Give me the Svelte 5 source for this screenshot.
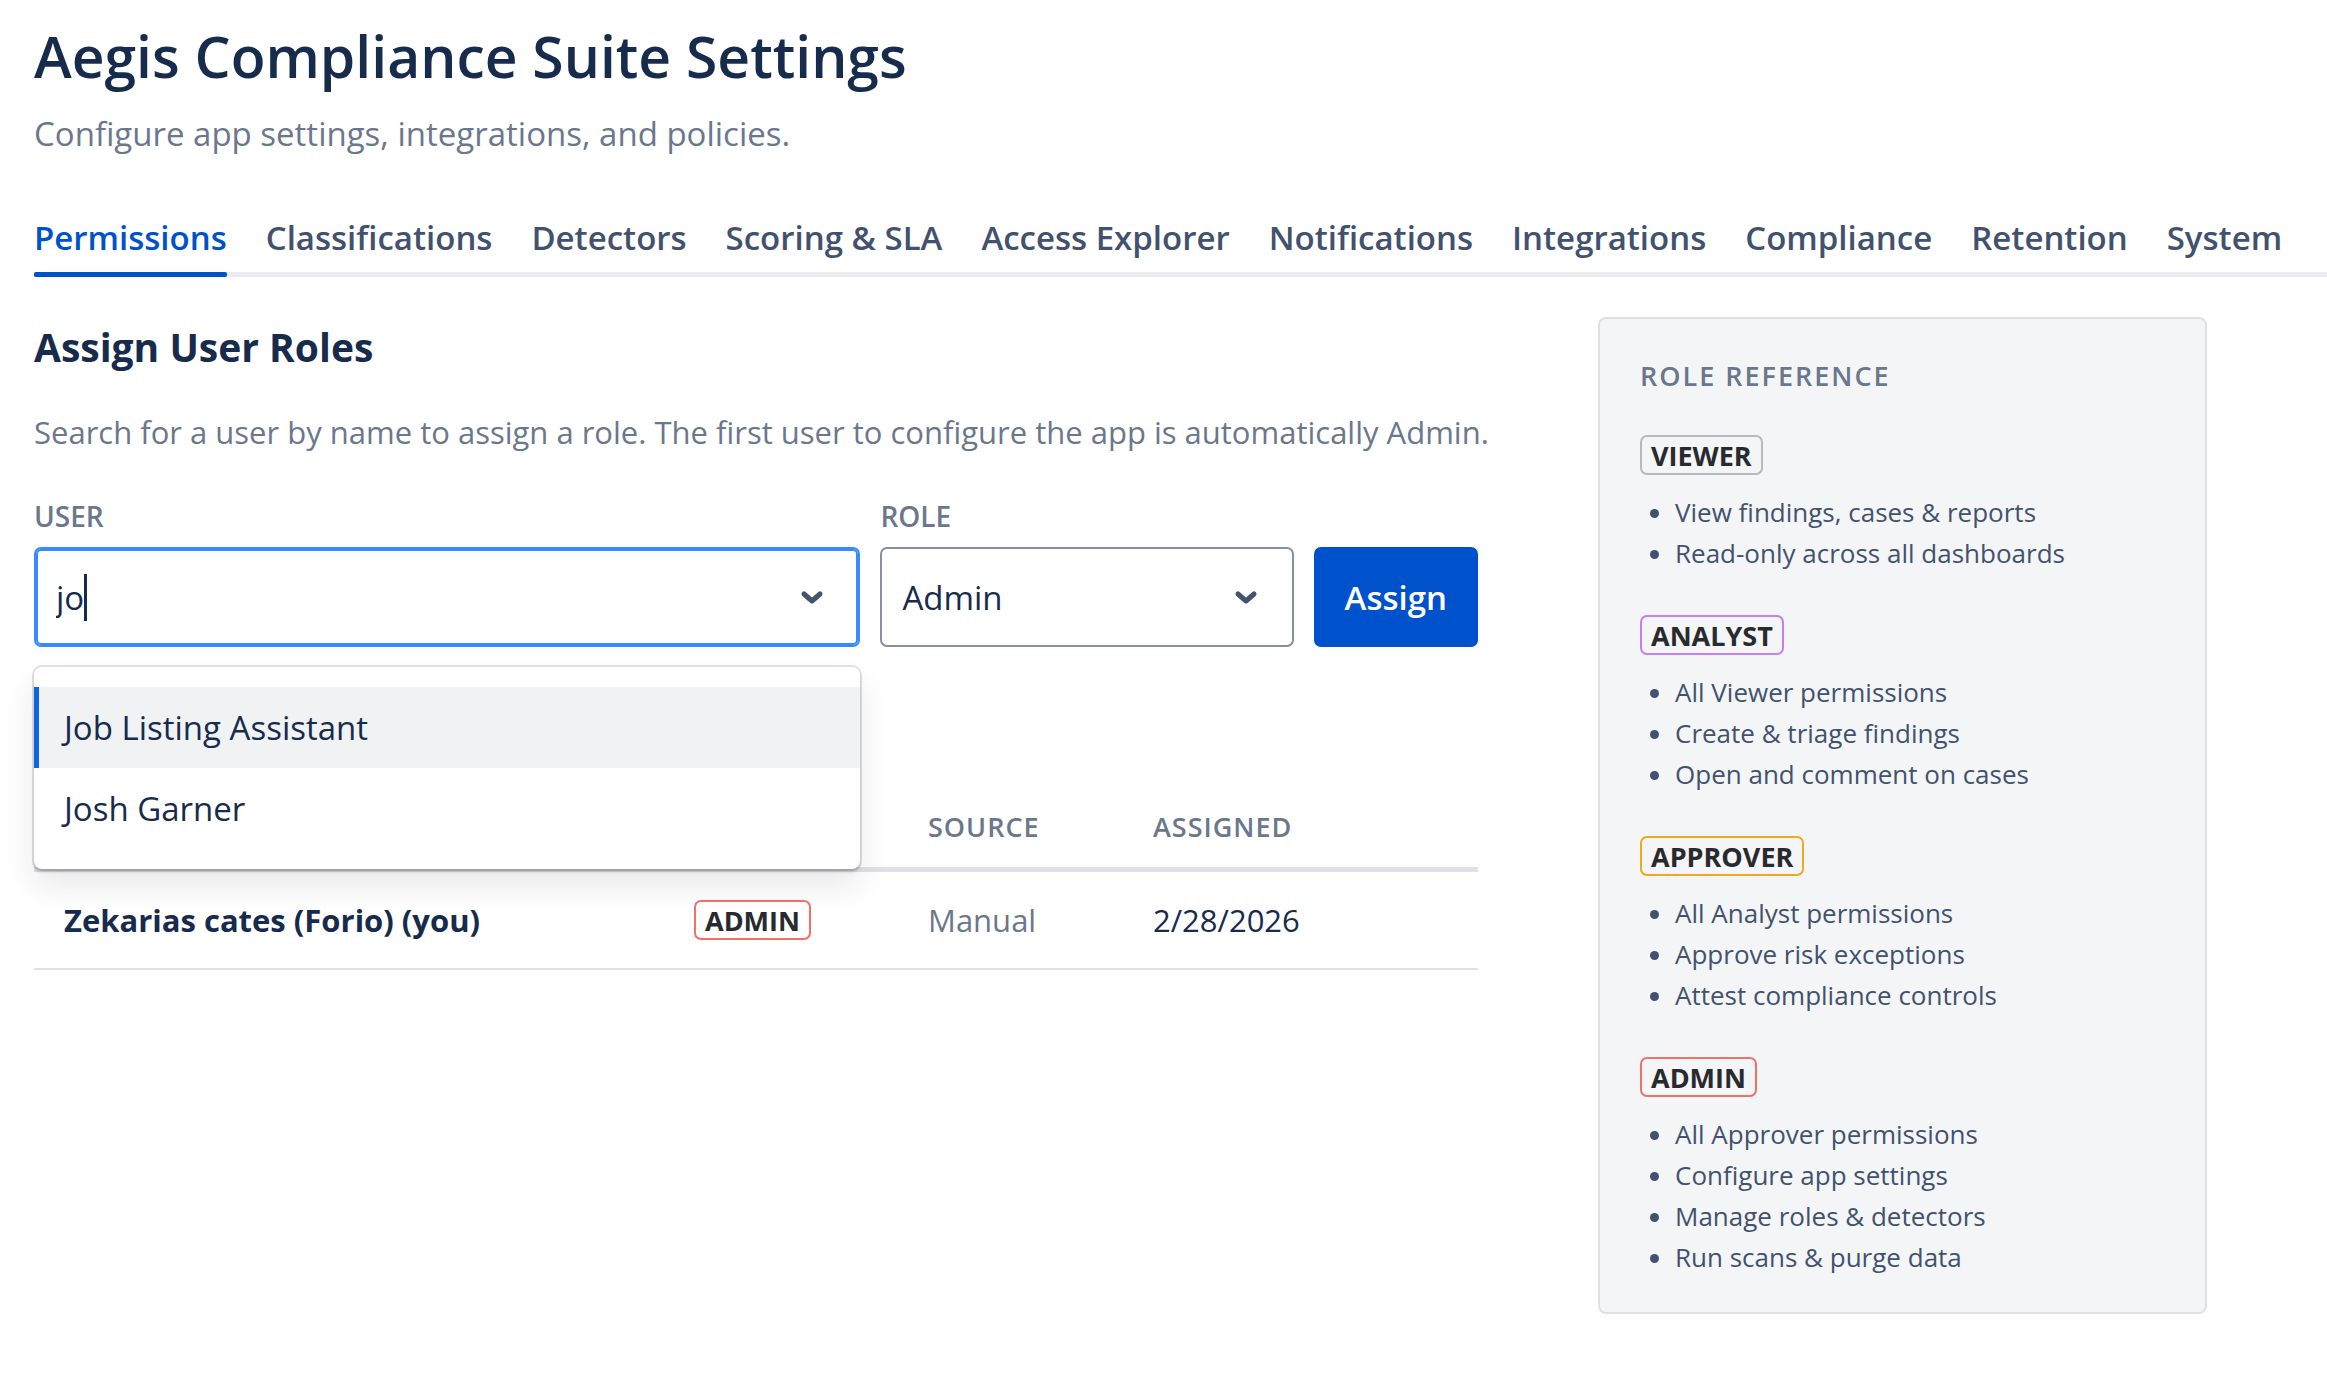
<script lang="ts">
  const tabs = [
    "Permissions",
    "Classifications",
    "Detectors",
    "Scoring & SLA",
    "Access Explorer",
    "Notifications",
    "Integrations",
    "Compliance",
    "Retention",
    "System",
  ];

  const roles = [
    {
      name: "Viewer",
      permissions: ["View findings, cases & reports", "Read-only across all dashboards"],
    },
    {
      name: "Analyst",
      permissions: ["All Viewer permissions", "Create & triage findings", "Open and comment on cases"],
    },
    {
      name: "Approver",
      permissions: ["All Analyst permissions", "Approve risk exceptions", "Attest compliance controls"],
    },
    {
      name: "Admin",
      permissions: [
        "All Approver permissions",
        "Configure app settings",
        "Manage roles & detectors",
        "Run scans & purge data",
      ],
    },
  ];

  const assignments = [
    { user: "Zekarias cates (Forio) (you)", role: "Admin", source: "Manual", assigned: "2/28/2026" },
  ];

  const users = ["Job Listing Assistant", "Josh Garner"];

  let activeTab = $state("Permissions");
  let query = $state("jo");
  let selectedRole = $state("Admin");
  let highlighted = $state(0);

  let matches = $derived(users.filter((user) => user.toLowerCase().startsWith(query.toLowerCase())));
</script>

{#snippet chevron()}
  <svg class="chevron" viewBox="0 0 24 16" aria-hidden="true">
    <path d="M4 5l8 7 8-7" fill="none" stroke="currentColor" stroke-width="5" stroke-linecap="round" stroke-linejoin="round" />
  </svg>
{/snippet}

<div class="page">
  <header>
    <h1>Aegis Compliance Suite Settings</h1>
    <p class="subtitle">Configure app settings, integrations, and policies.</p>
  </header>

  <nav class="tabs">
    {#each tabs as tab}
      <button class="tab" class:active={tab === activeTab} onclick={() => (activeTab = tab)}>{tab}</button>
    {/each}
  </nav>

  <div class="content">
    <main>
      <h2>Assign User Roles</h2>
      <p class="hint">
        Search for a user by name to assign a role. The first user to configure the app is automatically Admin.
      </p>

      <form class="assign-form" onsubmit={(e) => e.preventDefault()}>
        <div class="field">
          <label for="user">USER</label>
          <div class="control focused">
            <input id="user" type="text" autocomplete="off" bind:value={query} />
            <span class="caret"></span>
            {@render chevron()}

            {#if matches.length}
              <ul class="menu" role="listbox" aria-label="Users">
                {#each matches as user, i}
                  <li
                    class="option"
                    class:highlighted={i === highlighted}
                    role="option"
                    aria-selected={i === highlighted}
                    onmouseenter={() => (highlighted = i)}
                  >
                    {user}
                  </li>
                {/each}
              </ul>
            {/if}
          </div>
        </div>

        <div class="field">
          <label for="role">ROLE</label>
          <div class="control">
            <select id="role" bind:value={selectedRole}>
              {#each roles as role}
                <option>{role.name}</option>
              {/each}
            </select>
            {@render chevron()}
          </div>
        </div>

        <button class="assign" type="submit">Assign</button>
      </form>

      <table>
        <thead>
          <tr>
            <th class="col-user" aria-label="User"></th>
            <th class="col-role" aria-label="Role"></th>
            <th class="col-source">Source</th>
            <th>Assigned</th>
          </tr>
        </thead>
        <tbody>
          {#each assignments as row}
            <tr>
              <td class="name">{row.user}</td>
              <td><span class="badge {row.role.toLowerCase()}">{row.role}</span></td>
              <td class="muted">{row.source}</td>
              <td>{row.assigned}</td>
            </tr>
          {/each}
        </tbody>
      </table>
    </main>

    <aside>
      <h3>Role Reference</h3>
      {#each roles as role}
        <section>
          <span class="badge {role.name.toLowerCase()}">{role.name}</span>
          <ul>
            {#each role.permissions as permission}
              <li>{permission}</li>
            {/each}
          </ul>
        </section>
      {/each}
    </aside>
  </div>
</div>

<style>
  :global(body) {
    margin: 0;
    background: #fff;
  }

  .page {
    padding: 20px 0 70px 34px;
    font-family: "Segoe UI", "Open Sans", "Noto Sans", sans-serif;
    color: #172b4d;
  }

  h1,
  h2,
  h3,
  p,
  ul {
    margin: 0;
    padding: 0;
  }

  button,
  input,
  select {
    font: inherit;
    color: inherit;
  }

  h1 {
    font-size: 57px;
    line-height: 72px;
    font-weight: 600;
  }

  .subtitle {
    margin-top: 18px;
    font-size: 33px;
    line-height: 48px;
    color: #6b778c;
  }

  .tabs {
    display: flex;
    gap: 39px;
    margin-top: 56px;
    box-shadow: inset 0 -5px #ebecf0;
  }

  .tab {
    position: relative;
    padding: 0 0 15px;
    border: 0;
    background: none;
    font-size: 33px;
    line-height: 48px;
    font-weight: 600;
    color: #42526e;
    white-space: nowrap;
  }

  .tab.active {
    color: #0052cc;
  }

  .tab.active::after {
    content: "";
    position: absolute;
    left: 0;
    right: 0;
    bottom: 0;
    height: 5px;
    border-radius: 2px;
    background: #0052cc;
  }

  .content {
    display: grid;
    grid-template-columns: minmax(0, 1fr) 609px;
    align-items: start;
    gap: 120px;
    padding: 40px 120px 0 0;
  }

  h2 {
    padding-top: 4px;
    font-size: 39px;
    line-height: 52px;
    font-weight: 700;
  }

  .hint {
    margin-top: 35px;
    font-size: 31px;
    line-height: 48px;
    color: #6b778c;
    white-space: nowrap;
  }

  .assign-form {
    display: grid;
    grid-template-columns: 2fr 1fr auto;
    align-items: end;
    gap: 20px;
    margin-top: 42px;
  }

  label {
    display: block;
    margin-bottom: 13px;
    font-size: 28px;
    line-height: 36px;
    font-weight: 600;
    color: #6b778c;
  }

  .control {
    position: relative;
    display: flex;
    align-items: center;
    box-sizing: border-box;
    height: 100px;
    border: 2px solid #8590a2;
    border-radius: 7px;
    background: #fff;
    font-size: 33px;
  }

  .control.focused {
    padding-left: 20px;
    border-color: #388bff;
    box-shadow: inset 0 0 0 2px #388bff;
  }

  input {
    field-sizing: content;
    padding: 0;
    border: 0;
    outline: none;
    background: none;
    caret-color: transparent;
  }

  .caret {
    width: 3px;
    height: 47px;
    background: #172b4d;
  }

  select {
    width: 100%;
    height: 100%;
    padding: 0 80px 0 20px;
    border: 0;
    outline: none;
    background: none;
    appearance: none;
  }

  .chevron {
    position: absolute;
    right: 34px;
    width: 24px;
    height: 16px;
    color: #44546f;
    pointer-events: none;
  }

  .assign {
    height: 100px;
    padding: 0 31px;
    border: 0;
    border-radius: 7px;
    background: #0052cc;
    color: #fff;
    font-size: 33px;
    font-weight: 600;
  }

  .menu {
    position: absolute;
    z-index: 1;
    top: calc(100% + 22px);
    left: -2px;
    right: -2px;
    padding: 20px 0;
    border-radius: 8px;
    background: #fff;
    box-shadow:
      0 0 0 2px rgba(30, 31, 33, 0.12),
      0 3px 3px rgba(30, 31, 33, 0.16),
      0 16px 32px rgba(30, 31, 33, 0.1);
    list-style: none;
  }

  .option {
    padding: 0 30px;
    line-height: 81px;
  }

  .option.highlighted {
    background: #f1f2f4;
    box-shadow: inset 5px 0 #0c66e4;
  }

  table {
    width: 100%;
    margin-top: 140px;
    border-collapse: separate;
    border-spacing: 0;
    table-layout: fixed;
  }

  th {
    padding: 22px 0 22px 30px;
    border-bottom: 5px solid #dfe1e6;
    font-size: 27px;
    line-height: 36px;
    font-weight: 600;
    letter-spacing: 1px;
    text-align: left;
    text-transform: uppercase;
    color: #6b778c;
  }

  td {
    height: 96px;
    padding: 0 0 0 30px;
    border-bottom: 2px solid #dfe1e6;
    font-size: 31px;
  }

  .col-user {
    width: 600px;
  }

  .col-role {
    width: 204px;
  }

  .col-source {
    width: 195px;
  }

  .name {
    font-weight: 700;
  }

  .muted {
    color: #6b778c;
  }

  .badge {
    display: block;
    box-sizing: border-box;
    width: fit-content;
    height: 40px;
    padding: 0 9px;
    border: 2px solid #b7b9be;
    border-radius: 7px;
    font-size: 27px;
    line-height: 38px;
    font-weight: 700;
    text-transform: uppercase;
    color: #292a2e;
  }

  .badge.analyst {
    border-color: #c97cf4;
  }

  .badge.approver {
    border-color: #f0a81c;
  }

  .badge.admin {
    border-color: #f0716a;
  }

  aside {
    padding: 39px 40px 34px;
    border: 2px solid #dfe1e6;
    border-radius: 8px;
    background: #f4f5f7;
    box-sizing: border-box;
  }

  h3 {
    font-size: 27px;
    line-height: 36px;
    font-weight: 600;
    letter-spacing: 2px;
    text-transform: uppercase;
    color: #6b778c;
  }

  section {
    margin-top: 41px;
  }

  section ul {
    margin-top: 17px;
    padding-left: 35px;
    font-size: 26px;
    line-height: 41px;
    color: #42526e;
  }
</style>
